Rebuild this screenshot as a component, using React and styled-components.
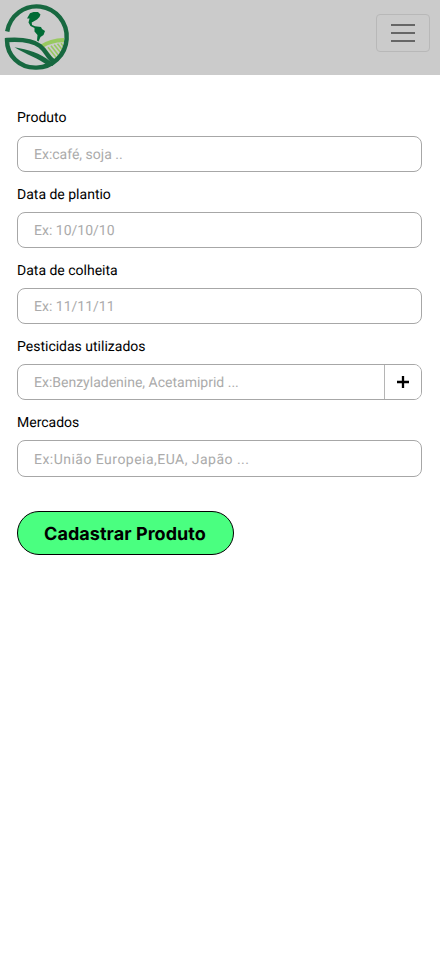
import React from "react";
import styled, { createGlobalStyle } from "styled-components";

const GlobalStyle = createGlobalStyle`
  *, *::before, *::after { box-sizing: border-box; }
  body { margin: 0; background: #fff; color: #000; font-family: Roboto, sans-serif; text-rendering: geometricPrecision; }
  input, button { text-rendering: inherit; }
`;

const Page = styled.div`
  min-height: 956px;
  background: #fff;
`;

const Header = styled.header`
  display: flex;
  justify-content: space-between;
  align-items: flex-start;
  height: 75px;
  background: #cbcbcb;
`;

const LogoArt = styled.svg`
  display: block;
  width: 76px;
  height: 75px;
`;

const MenuButton = styled.button`
  display: flex;
  flex-direction: column;
  align-items: center;
  justify-content: center;
  gap: 6px;
  width: 54px;
  height: 38px;
  margin: 14px 10px 0 0;
  padding: 0;
  background: transparent;
  border: 1px solid #b8b8b8;
  border-radius: 4px;
`;

const MenuBar = styled.span`
  width: 24px;
  height: 2px;
  background: #666;
`;

const Form = styled.form`
  display: flex;
  flex-direction: column;
  align-items: flex-start;
  padding: 32px 18px 0 17px;
`;

const Field = styled.div`
  width: 100%;
  height: ${(p) => p.$height || 76}px;
`;

const Label = styled.label`
  display: block;
  height: ${(p) => p.$height || 28}px;
  padding-top: 1px;
  font-size: 14px;
  line-height: 20px;
`;

const InputBox = styled.div`
  display: flex;
  height: ${(p) => p.$height || 36}px;
  border: 1px solid #a7a7a7;
  border-radius: 8px;
  overflow: hidden;
`;

const Input = styled.input`
  flex: 1;
  min-width: 0;
  padding: 2px 16px 0;
  border: 0;
  outline: 0;
  background: transparent;
  font: 400 14px Roboto, sans-serif;
  letter-spacing: ${(p) => p.$spacing || "0"};
  &::placeholder { color: #ababab; opacity: 1; }
`;

const AddButton = styled.button`
  display: flex;
  align-items: center;
  justify-content: center;
  width: 37px;
  padding: 0;
  border: 0;
  border-left: 1px solid #b5b5b5;
  background: #fff;
`;

const SubmitButton = styled.button`
  width: 217px;
  height: 44px;
  margin-top: 23px;
  padding: 2px 1px 0 0;
  border: 1px solid #000;
  border-radius: 22px;
  background: #4aff80;
  color: #000;
  font: 700 18px Inter, sans-serif;
  letter-spacing: 0.05px;
`;

const fields = [
  { id: "produto", label: "Produto", placeholder: "Ex:café, soja ..", height: 77, labelHeight: 29 },
  { id: "plantio", label: "Data de plantio", placeholder: "Ex: 10/10/10" },
  { id: "colheita", label: "Data de colheita", placeholder: "Ex: 11/11/11" },
  { id: "pesticidas", label: "Pesticidas utilizados", placeholder: "Ex:Benzyladenine, Acetamiprid ...", add: true },
  { id: "mercados", label: "Mercados", placeholder: "Ex:União Europeia,EUA, Japão ...", boxHeight: 37, spacing: "0.47px" },
];

function Logo() {
  return (
    <LogoArt viewBox="0 0 76 75" aria-label="Logo">
      <path d="M39 45.5Q50 38.2 64 38V42.3Q52 42 43 47.8Z" fill="#98c960" />
      <path d="M45 49L53.5 60M48 47.3L56.5 58M51 45.8L59 56M54.2 44.7L61 53M57.5 43.8L62.5 50M61 43.3L64 47" fill="none" stroke="#98c960" strokeWidth="1.6" />
      <path d="M7.2 31.5A30 30.6 0 1 1 36.5 67.6C19 68.2 6.8 55 7 40C22 39 33 40.5 40 46C47 51.5 47.5 58 54.5 62" fill="none" stroke="#176840" strokeWidth="4.4" />
      <path d="M14.5 47.3C28 49.5 40 53 50.5 61.5L53 66L48.5 66C38 58 27 55 14.5 47.3Z" fill="#176840" />
      <path d="M27 18.5L30 13.2L33.5 12L38 12L40.5 14.5L39.5 17L37 19.5L33.5 21.5L31.7 22.6L32 25L35 26.2L37 26.5L41 27L42 29L45 31L43.5 35L40.5 37L38.5 41.5L37 40.5L37.5 35L34.5 31.5L34.5 28L30.5 26L28.5 22.5L29.5 18.5Z" fill="#006b35" />
    </LogoArt>
  );
}

export default function App() {
  return (
    <>
      <GlobalStyle />
      <Page>
        <Header>
          <Logo />
          <MenuButton type="button" aria-label="Menu">
            <MenuBar /><MenuBar /><MenuBar />
          </MenuButton>
        </Header>
        <Form>
          {fields.map((f) => (
            <Field key={f.id} $height={f.height}>
              <Label htmlFor={f.id} $height={f.labelHeight}>{f.label}</Label>
              <InputBox $height={f.boxHeight}>
                <Input id={f.id} placeholder={f.placeholder} $spacing={f.spacing} />
                {f.add && (
                  <AddButton type="button" aria-label="Adicionar">
                    <svg width="12" height="12" viewBox="0 0 12 12">
                      <path d="M6 0V12M0 6H12" stroke="#000" strokeWidth="2.3" />
                    </svg>
                  </AddButton>
                )}
              </InputBox>
            </Field>
          ))}
          <SubmitButton type="button">Cadastrar Produto</SubmitButton>
        </Form>
      </Page>
    </>
  );
}
